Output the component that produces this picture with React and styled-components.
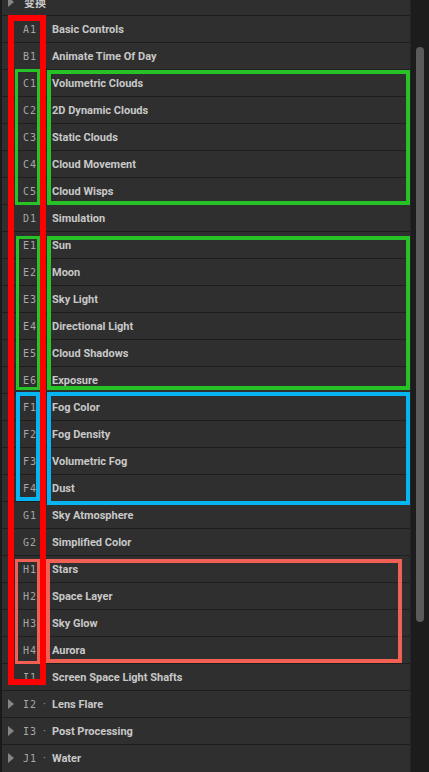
import styled, { createGlobalStyle } from "styled-components";

const GlobalStyle = createGlobalStyle`
  html, body {
    margin: 0;
    padding: 0;
    background: #1c1c1c;
  }
`;

const Viewport = styled.div`
  width: 429px;
  height: 772px;
  overflow: hidden;
  display: flex;
  background: #1c1c1c;
`;

const Panel = styled.div`
  position: relative;
  flex: 1;
  border-left: 2px solid #1a1a1a;
  background: #2f2f2f;
`;

const List = styled.div`
  margin-top: -12px;
  display: flex;
  flex-direction: column;
`;

const Row = styled.div`
  height: 26px;
  border-top: 1px solid #1e1e1e;
  display: flex;
  align-items: center;
  background: #2f2f2f;
  font-family: Roboto, "Noto Sans", "Noto Sans CJK SC", sans-serif;
`;

const Marker = styled.div`
  width: 6px;
  margin-left: 6px;
  display: flex;
  align-items: center;
  justify-content: flex-start;
`;

const Tick = styled.span`
  width: 1px;
  height: 8px;
  background: #5c4444;
`;

const Arrow = styled.span`
  width: 0;
  height: 0;
  border-top: 5px solid transparent;
  border-bottom: 5px solid transparent;
  border-left: 6px solid #858585;
`;

const Id = styled.span`
  width: 19px;
  margin-left: 9px;
  font-family: "DejaVu Sans Mono", "Liberation Mono", monospace;
  font-size: 10px;
  letter-spacing: 1px;
  color: #a8a8a8;
`;

const Dot = styled.span`
  width: 10px;
  padding-left: 1px;
  box-sizing: border-box;
  font-size: 11px;
  color: #a0a0a0;
`;

const Label = styled.span`
  margin-left: ${(p) => (p.$dotted ? "0" : "10px")};
  font-size: 11px;
  font-weight: 700;
  color: #c8c8c8;
  white-space: nowrap;
`;

const HeadLabel = styled.span`
  margin-left: 10px;
  font-size: 11px;
  font-weight: 700;
  color: #c8c8c8;
`;

const Track = styled.div`
  width: 18px;
  border-left: 1px solid #252525;
  background: #1c1c1c;
  display: flex;
  justify-content: center;
`;

const Thumb = styled.div`
  width: 8px;
  margin-top: 47px;
  height: 575px;
  border-radius: 4px;
  background: #5b5b5b;
`;

const Box = styled.div`
  position: absolute;
  box-sizing: border-box;
  pointer-events: none;
  border: ${(p) => p.$w}px solid ${(p) => p.$c};
`;

const RED = "#ff0000";
const GREEN = "#26c226";
const BLUE = "#06b4f2";
const SALMON = "#f26053";

const rows = [
  ["A1", "Basic Controls"],
  ["B1", "Animate Time Of Day"],
  ["C1", "Volumetric Clouds"],
  ["C2", "2D Dynamic Clouds"],
  ["C3", "Static Clouds"],
  ["C4", "Cloud Movement"],
  ["C5", "Cloud Wisps"],
  ["D1", "Simulation"],
  ["E1", "Sun"],
  ["E2", "Moon"],
  ["E3", "Sky Light"],
  ["E4", "Directional Light"],
  ["E5", "Cloud Shadows"],
  ["E6", "Exposure"],
  ["F1", "Fog Color"],
  ["F2", "Fog Density"],
  ["F3", "Volumetric Fog"],
  ["F4", "Dust"],
  ["G1", "Sky Atmosphere"],
  ["G2", "Simplified Color"],
  ["H1", "Stars"],
  ["H2", "Space Layer"],
  ["H3", "Sky Glow"],
  ["H4", "Aurora"],
  ["I1", "Screen Space Light Shafts"],
  ["I2", "Lens Flare", true],
  ["I3", "Post Processing", true],
  ["J1", "Water", true],
];

// overlay boxes: left, top, width, height, border, colour (panel coords)
const boxes = [
  [6, 15, 38, 670, 6, RED],
  [13, 69, 25, 136, 3, GREEN],
  [45, 70, 363, 135, 4, GREEN],
  [14, 236, 24, 154, 3, GREEN],
  [45, 236, 363, 154, 4, GREEN],
  [14, 392, 24, 109, 4, BLUE],
  [45, 392, 363, 113, 4, BLUE],
  [13, 559, 25, 105, 3, SALMON],
  [44, 559, 356, 104, 4, SALMON],
];

export default function App() {
  return (
    <>
      <GlobalStyle />
      <Viewport>
        <Panel>
          <List>
            <Row>
              <Marker>
                <Arrow />
              </Marker>
              <HeadLabel>变换</HeadLabel>
            </Row>
            {rows.map(([id, label, group]) => (
              <Row key={id}>
                <Marker>{group ? <Arrow /> : <Tick />}</Marker>
                <Id>{id}</Id>
                {group && <Dot>·</Dot>}
                <Label $dotted={group}>{label}</Label>
              </Row>
            ))}
          </List>
          {boxes.map(([l, t, w, h, b, c], i) => (
            <Box
              key={i}
              $w={b}
              $c={c}
              style={{ left: l, top: t, width: w, height: h }}
            />
          ))}
        </Panel>
        <Track>
          <Thumb />
        </Track>
      </Viewport>
    </>
  );
}
